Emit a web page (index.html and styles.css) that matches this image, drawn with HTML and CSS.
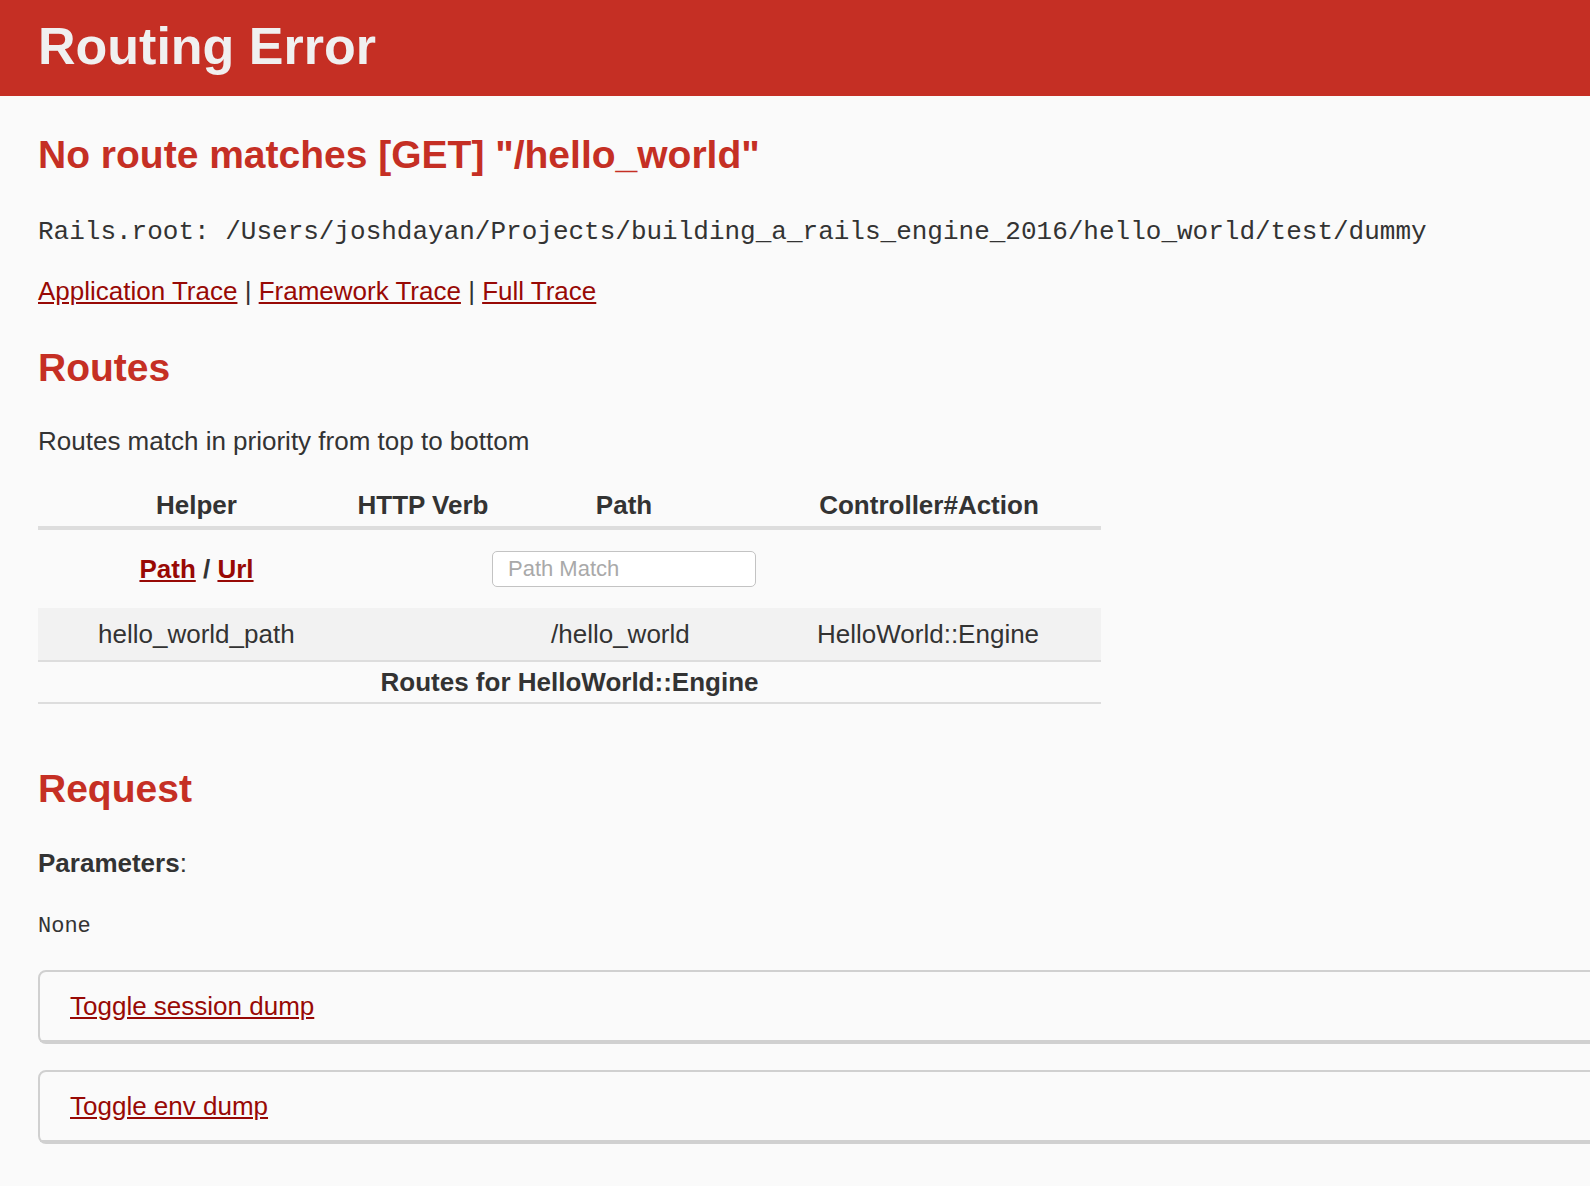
FILE: index.html
```html
<!DOCTYPE html>
<html lang="en">
<head>
<meta charset="utf-8">
<title>Action Controller: Exception caught</title>
<link rel="stylesheet" href="styles.css">
</head>
<body>
<header class="page-header">
  <h1 class="page-title">Routing Error</h1>
</header>
<div class="container">
  <h2 class="heading heading-msg">No route matches [GET] "/hello_world"</h2>
  <p class="root-line"><code class="root-code">Rails.root: /Users/joshdayan/Projects/building_a_rails_engine_2016/hello_world/test/dummy</code></p>
  <div class="traces">
    <a href="#" class="link">Application Trace</a> | <a href="#" class="link">Framework Trace</a> | <a href="#" class="link">Full Trace</a>
  </div>
  <h2 class="heading heading-routes">Routes</h2>
  <p class="note">Routes match in priority from top to bottom</p>
  <table class="route-table">
    <colgroup>
      <col class="col-helper"><col class="col-verb"><col class="col-path"><col class="col-action">
    </colgroup>
    <thead>
      <tr class="head-row"><th>Helper</th><th>HTTP Verb</th><th>Path</th><th>Controller#Action</th></tr>
      <tr class="filter-row"><th><a href="#" class="link">Path</a> / <a href="#" class="link">Url</a></th><th></th><th><input type="text" class="search" placeholder="Path Match"></th><th></th></tr>
    </thead>
    <tbody>
      <tr class="route-row odd"><td>hello_world_path</td><td></td><td>/hello_world</td><td>HelloWorld::Engine</td></tr>
      <tr class="route-row engine-row"><th colspan="4">Routes for HelloWorld::Engine</th></tr>
    </tbody>
  </table>
  <h2 class="heading heading-request">Request</h2>
  <p class="params"><b>Parameters</b>:</p>
  <pre class="dump">None</pre>
  <div class="details details-first"><div class="summary"><a href="#" class="link">Toggle session dump</a></div></div>
  <div class="details"><div class="summary"><a href="#" class="link">Toggle env dump</a></div></div>
</div>
</body>
</html>
```

FILE: styles.css
```css
html, body {
  margin: 0;
  padding: 0;
}

body {
  background: #FAFAFA;
  color: #333;
  font-family: "Liberation Sans", Arial, Helvetica, sans-serif;
  font-size: 26px;
  line-height: 36px;
  overflow-x: hidden;
}

.page-header {
  background: #C52F24;
  color: #F0F0F0;
  padding: 18px 38px 21px;
}

.page-title {
  margin: 0;
  font-size: 52px;
  line-height: 57px;
  font-weight: bold;
}

.container {
  padding: 0 38px;
}

.heading {
  color: #C52F24;
  font-size: 39px;
  line-height: 50px;
  font-weight: bold;
  margin: 0;
}

.heading-msg { margin-top: 34px; }
.heading-routes { margin-top: 34px; }
.heading-request { margin-top: 60px; }

.root-line {
  margin: 32px 0 0;
}

.root-code {
  font-family: "Liberation Mono", "Courier New", monospace;
  font-size: 26px;
  line-height: 26px;
}

.traces {
  margin-top: 25px;
}

.link {
  color: #980905;
}

.note {
  margin: 30px 0 0;
}

.route-table {
  margin-top: 26px;
  border-collapse: collapse;
  table-layout: fixed;
  width: 1063px;
}

.col-helper { width: 317px; }
.col-verb { width: 136px; }
.col-path { width: 266px; }
.col-action { width: 344px; }

.route-table th {
  font-weight: bold;
  text-align: center;
}

.head-row {
  border-bottom: 4px solid #ddd;
}

.head-row th {
  padding: 2px 2px 3px;
}

.filter-row th {
  padding: 20px 0;
  line-height: 38px;
}

.search {
  display: block;
  box-sizing: border-box;
  width: 264px;
  height: 36px;
  margin: 1px auto;
  padding: 0 15px;
  border: 1px solid #c3c3c3;
  border-radius: 5px;
  background: #fff;
  font-family: "Liberation Sans", Arial, sans-serif;
  font-size: 22px;
  color: #333;
  outline: none;
  -webkit-appearance: none;
  appearance: none;
}

.search::placeholder {
  color: #a9a9a9;
}

.route-row {
  border-bottom: 2px solid #ddd;
}

.route-row td {
  padding: 8px 60px;
  text-align: left;
}

.odd {
  background: #f2f2f2;
}

.engine-row th {
  padding: 2px;
}

.params {
  margin: 31px 0 0;
}

.dump {
  margin: 28px 0 0;
  font-family: "Liberation Mono", "Courier New", monospace;
  font-size: 22px;
  line-height: 36px;
}

.details {
  border: 2px solid #D0D0D0;
  border-radius: 8px;
  width: 1956px;
  margin-top: 26px;
}

.details-first {
  margin-top: 25px;
}

.summary {
  padding: 16px 30px;
  border-bottom: 2px solid #D0D0D0;
}
```
